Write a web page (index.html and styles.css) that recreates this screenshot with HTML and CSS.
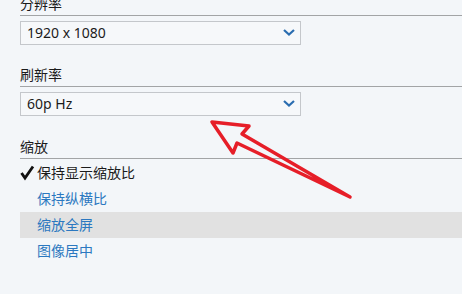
FILE: index.html
```html
<!DOCTYPE html>
<html lang="zh-CN">
<head>
<meta charset="utf-8">
<title>显示设置</title>
<link rel="stylesheet" href="styles.css">
</head>
<body>
<div class="panel">
  <div class="label first">分辨率</div>
  <div class="select">
    <span class="value">1920 x 1080</span>
    <svg class="chev" width="12" height="7" viewBox="0 0 12 7"><path d="M1 1 L6 5.5 L11 1" fill="none" stroke="#2a6db0" stroke-width="2.2"/></svg>
  </div>
  <div class="label">刷新率</div>
  <div class="select">
    <span class="value">60p Hz</span>
    <svg class="chev" width="12" height="7" viewBox="0 0 12 7"><path d="M1 1 L6 5.5 L11 1" fill="none" stroke="#2a6db0" stroke-width="2.2"/></svg>
  </div>
  <div class="label zoom">缩放</div>
  <ul class="options">
    <li class="opt checked"><svg class="check" width="17" height="16" viewBox="0 0 17 16"><path d="M1.5 8 L5 13 L13 1.5" fill="none" stroke="#111" stroke-width="2.8" stroke-linejoin="miter"/></svg>保持显示缩放比</li>
    <li class="opt link">保持纵横比</li>
    <li class="opt link hover">缩放全屏</li>
    <li class="opt link">图像居中</li>
  </ul>
</div>
<svg class="arrow" width="462" height="300" viewBox="0 0 462 300">
  <path d="M212 122 L249 126 L242 134 L350 197 L237 143 L233 153 Z" fill="none" stroke="#e61e28" stroke-width="3.5" stroke-linejoin="round"/>
</svg>
</body>
</html>
```
FILE: styles.css
```css
html, body {
  margin: 0;
  padding: 0;
  background: #ffffff;
}
body {
  position: relative;
  width: 462px;
  height: 300px;
  overflow: hidden;
  font-family: "Noto Sans", "Noto Sans CJK SC", sans-serif;
  font-size: 14px;
  color: #1b1b1b;
}
.panel {
  height: 294px;
  background: #f3f6f9;
  padding-left: 20px;
  box-sizing: border-box;
  overflow: hidden;
  display: flex;
  flex-direction: column;
}
.label {
  line-height: 20px;
  height: 20px;
  padding-bottom: 1px;
  border-bottom: 1px solid #a2a4a6;
  margin-top: 20px;
  flex-shrink: 0;
}
.label.first {
  margin-top: -6px;
}
.label.zoom {
  margin-top: 21px;
}
.select {
  margin-top: 5px;
  width: 281px;
  height: 24px;
  box-sizing: border-box;
  border: 1px solid #c4c7cb;
  background: #f6f8fa;
  display: flex;
  align-items: center;
  justify-content: space-between;
  padding: 0 5px 0 6px;
  flex-shrink: 0;
}
.value {
  line-height: 22px;
}
.chev {
  display: block;
  margin-top: -1px;
}
.options {
  list-style: none;
  margin: 1px 0 0 0;
  padding: 0;
}
.opt {
  height: 26px;
  line-height: 26px;
  padding-left: 17px;
  position: relative;
}
.opt.checked {
  padding-left: 0;
  display: flex;
  align-items: center;
}
.check {
  display: block;
  flex-shrink: 0;
  margin-top: -1px;
}
.link {
  color: #2b78c0;
}
.hover {
  background: #e1e1e1;
}
.arrow {
  position: absolute;
  left: 0;
  top: 0;
  pointer-events: none;
}
```
